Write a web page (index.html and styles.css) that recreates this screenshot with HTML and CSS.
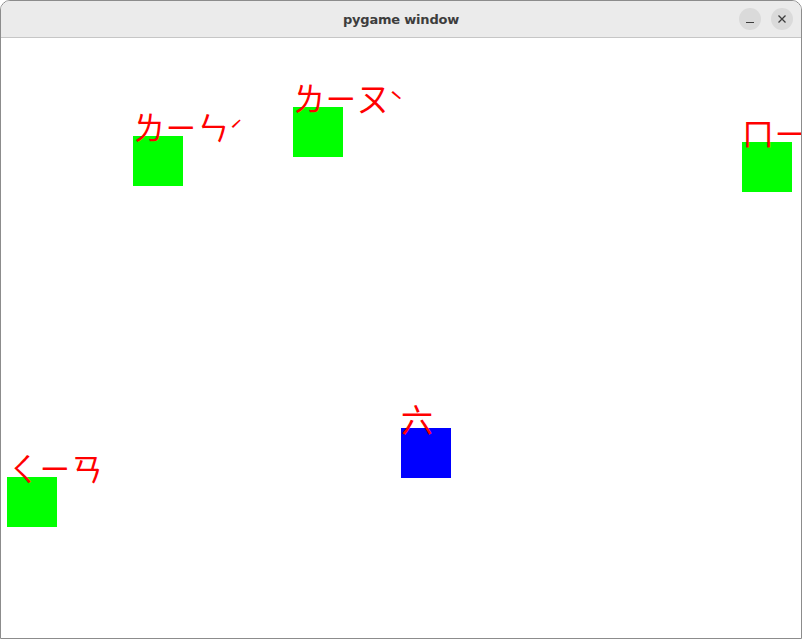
FILE: index.html
```html
<!DOCTYPE html>
<html lang="zh-Hant">
<head>
<meta charset="utf-8">
<title>pygame window</title>
<link rel="stylesheet" href="styles.css">
</head>
<body>
<div class="window">
  <div class="titlebar">
    <div class="title">pygame window</div>
    <div class="controls">
      <button class="ctl" aria-label="minimize">
        <svg width="10" height="10" viewBox="0 0 10 10"><line x1="1" y1="8.5" x2="9" y2="8.5" stroke="#3d3d3d" stroke-width="1.2"/></svg>
      </button>
      <button class="ctl" aria-label="close">
        <svg width="10" height="10" viewBox="0 0 10 10"><path d="M1.5 1.5 L8.5 8.5 M8.5 1.5 L1.5 8.5" stroke="#3d3d3d" stroke-width="1.3"/></svg>
      </button>
    </div>
  </div>
  <div class="canvas">
    <div class="sprite green" style="left:132px;top:98px"><span class="label">ㄌㄧㄣ<span class="tone">ˊ</span></span></div>
    <div class="sprite green" style="left:292px;top:69px"><span class="label">ㄌㄧㄡ<span class="tone">ˋ</span></span></div>
    <div class="sprite green" style="left:741px;top:104px"><span class="label">ㄇㄧㄢ<span class="tone">ˊ</span></span></div>
    <div class="sprite green" style="left:6px;top:439px"><span class="label">ㄑㄧㄢ</span></div>
    <div class="sprite blue" style="left:400px;top:390px"><span class="label">六</span></div>
  </div>
</div>
</body>
</html>
```
FILE: styles.css
```css
html, body {
  margin: 0;
  padding: 0;
  background: #ffffff;
}
.window {
  width: 800px;
  height: 637px;
  border: 1px solid #8c8c8c;
  border-radius: 10px 10px 0 0;
  overflow: hidden;
  display: flex;
  flex-direction: column;
  background: #ffffff;
}
.titlebar {
  height: 36px;
  flex: none;
  background: #ebebeb;
  border-bottom: 1px solid #c6c6c6;
  display: flex;
  align-items: center;
  justify-content: center;
  position: relative;
}
.title {
  font-family: "DejaVu Sans", sans-serif;
  font-weight: bold;
  font-size: 13px;
  color: #3d3d3d;
  letter-spacing: -0.2px;
}
.controls {
  position: absolute;
  right: 8px;
  top: 7px;
  display: flex;
  gap: 10px;
}
.ctl {
  width: 22px;
  height: 22px;
  border-radius: 50%;
  border: none;
  padding: 0;
  background: #dadada;
  display: flex;
  align-items: center;
  justify-content: center;
}
.canvas {
  position: relative;
  flex: 1;
  overflow: hidden;
  background: #ffffff;
}
.sprite {
  position: absolute;
  width: 50px;
  height: 50px;
}
.green { background: #00ff00; }
.blue { background: #0000ff; }
.label {
  position: absolute;
  left: 0;
  top: -26px;
  white-space: nowrap;
  font-family: "Noto Sans CJK TC", "Noto Sans CJK SC", sans-serif;
  font-size: 32px;
  line-height: 32px;
  color: #ff0000;
}
.tone {
  font-size: 24px;
}
```
